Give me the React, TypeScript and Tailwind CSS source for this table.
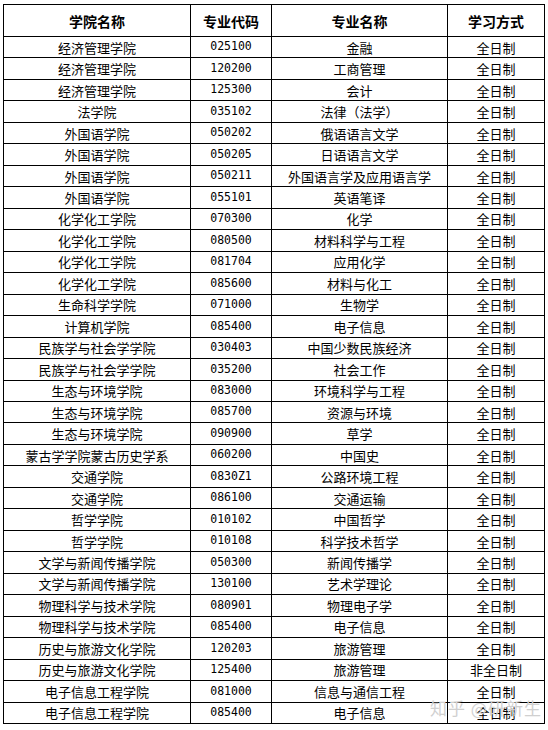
const rows: [string, string, string, string][] = [
  ["经济管理学院", "025100", "金融", "全日制"],
  ["经济管理学院", "120200", "工商管理", "全日制"],
  ["经济管理学院", "125300", "会计", "全日制"],
  ["法学院", "035102", "法律（法学）", "全日制"],
  ["外国语学院", "050202", "俄语语言文学", "全日制"],
  ["外国语学院", "050205", "日语语言文学", "全日制"],
  ["外国语学院", "050211", "外国语言学及应用语言学", "全日制"],
  ["外国语学院", "055101", "英语笔译", "全日制"],
  ["化学化工学院", "070300", "化学", "全日制"],
  ["化学化工学院", "080500", "材料科学与工程", "全日制"],
  ["化学化工学院", "081704", "应用化学", "全日制"],
  ["化学化工学院", "085600", "材料与化工", "全日制"],
  ["生命科学学院", "071000", "生物学", "全日制"],
  ["计算机学院", "085400", "电子信息", "全日制"],
  ["民族学与社会学学院", "030403", "中国少数民族经济", "全日制"],
  ["民族学与社会学学院", "035200", "社会工作", "全日制"],
  ["生态与环境学院", "083000", "环境科学与工程", "全日制"],
  ["生态与环境学院", "085700", "资源与环境", "全日制"],
  ["生态与环境学院", "090900", "草学", "全日制"],
  ["蒙古学学院蒙古历史学系", "060200", "中国史", "全日制"],
  ["交通学院", "0830Z1", "公路环境工程", "全日制"],
  ["交通学院", "086100", "交通运输", "全日制"],
  ["哲学学院", "010102", "中国哲学", "全日制"],
  ["哲学学院", "010108", "科学技术哲学", "全日制"],
  ["文学与新闻传播学院", "050300", "新闻传播学", "全日制"],
  ["文学与新闻传播学院", "130100", "艺术学理论", "全日制"],
  ["物理科学与技术学院", "080901", "物理电子学", "全日制"],
  ["物理科学与技术学院", "085400", "电子信息", "全日制"],
  ["历史与旅游文化学院", "120203", "旅游管理", "全日制"],
  ["历史与旅游文化学院", "125400", "旅游管理", "非全日制"],
  ["电子信息工程学院", "081000", "信息与通信工程", "全日制"],
  ["电子信息工程学院", "085400", "电子信息", "全日制"],
];

const headers = ["学院名称", "专业代码", "专业名称", "学习方式"];

export default function App() {
  return (
    <div className="relative w-[548px] h-[730px] bg-white pl-[3px] pt-[4px] font-['Noto_Sans_CJK_SC',sans-serif] text-black">
      <table className="w-[541px] border-collapse table-fixed text-[13px] leading-none">
        <colgroup>
          <col className="w-[187px]" />
          <col className="w-[81px]" />
          <col className="w-[176px]" />
          <col className="w-[97px]" />
        </colgroup>
        <thead>
          <tr className="h-[32px]">
            {headers.map((h) => (
              <th
                key={h}
                className="border border-black text-center font-bold text-[14px] p-0"
              >
                {h}
              </th>
            ))}
          </tr>
        </thead>
        <tbody>
          {rows.map((r, i) => (
            <tr key={i} className="h-[21.47px]">
              {r.map((c, j) => (
                <td
                  key={j}
                  className={`border border-black text-center p-0 whitespace-nowrap ${
                    j === 1 ? "font-['DejaVu_Sans_Mono',monospace] text-[11.5px]" : ""
                  }`}
                >
                  {c}
                </td>
              ))}
            </tr>
          ))}
        </tbody>
      </table>

      {/* watermark */}
      <div className="absolute left-[430px] top-[699px] text-[17px] leading-none text-[#d0d0d0] tracking-[1px] pointer-events-none whitespace-nowrap">
        知乎 @研新生
      </div>
    </div>
  );
}
